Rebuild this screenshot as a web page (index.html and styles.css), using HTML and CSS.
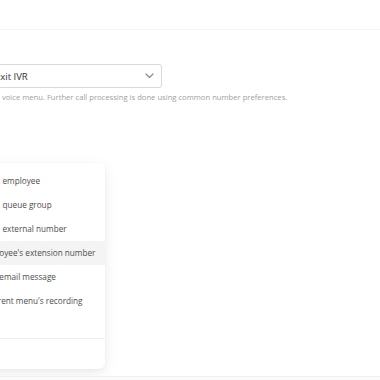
FILE: index.html
```html
<!DOCTYPE html>
<html lang="en">
<head>
<meta charset="utf-8"/>
<title>IVR key action</title>
<link rel="stylesheet" href="styles.css">
</head>
<body>
<div class="page">
  <div class="topbar"></div>
  <div class="form">
    <div class="field">
      <div class="select">
        <span class="select-value">Exit IVR</span>
        <svg class="chevron" width="9" height="6" viewBox="0 0 9 6"><path d="M1 1l3.5 3.5L8 1" fill="none" stroke="#8c8c8c" stroke-width="1.2" stroke-linecap="round" stroke-linejoin="round"/></svg>
      </div>
      <p class="hint">Exit from the voice menu. Further call processing is done using common number preferences.</p>
    </div>

    <div class="menu">
      <ul class="menu-list">
        <li class="menu-item">Transfer to <span class="target">employee</span></li>
        <li class="menu-item">Transfer to <span class="target">queue group</span></li>
        <li class="menu-item">Transfer to <span class="target">external number</span></li>
        <li class="menu-item is-hover">Route employee's extension number</li>
        <li class="menu-item">Record voicemail message</li>
        <li class="menu-item">Re-play current menu's recording</li>
        <li class="menu-item">Exit IVR</li>
      </ul>
      <div class="menu-footer"></div>
    </div>
  </div>
  <div class="footer"></div>
</div>
</body>
</html>
```

FILE: styles.css
```css
html, body { margin: 0; background: #fff; }
body { font-family: "Open Sans", "Noto Sans", sans-serif; color: #333; }
.page { width: 380px; height: 380px; overflow: hidden; display: flex; flex-direction: column; }

.topbar { height: 29px; border-bottom: 1px solid #f3f3f3; flex: none; }

.form { flex: 1; padding-top: 34px; }

.field { margin-left: -20px; }
.select { box-sizing: border-box; width: 182px; height: 24px; border: 1px solid #dadada; border-radius: 3px;
  display: flex; align-items: center; justify-content: space-between; padding: 0 7px 0 14px; }
.select-value { font-size: 9.5px; color: #333; }
.chevron { display: block; }
.hint { margin: 4px 0 0 0; font-size: 7.65px; color: #a0a0a0; text-indent: -26px; white-space: nowrap; }

.menu { margin: 61px 0 0 -60px; width: 165px; background: #fff; border-radius: 6px;
  box-shadow: 0 4px 14px rgba(0,0,0,0.08), 0 1px 3px rgba(0,0,0,0.04); }
.menu-list { list-style: none; margin: 0; padding: 6px 0 0; }
.menu-item { height: 24.1px; line-height: 24.1px; padding-left: 15.4px; font-size: 8.2px; color: #4d4d4d; white-space: nowrap; }
.menu-item .target { margin-left: 3px; }
.menu-item.is-hover { background: #f4f4f4; }
.menu-footer { height: 30px; border-top: 1px solid #efefef; }

.footer { height: 3px; border-top: 1px solid #f0f0f0; background: #fbfbfb; flex: none; }
```
